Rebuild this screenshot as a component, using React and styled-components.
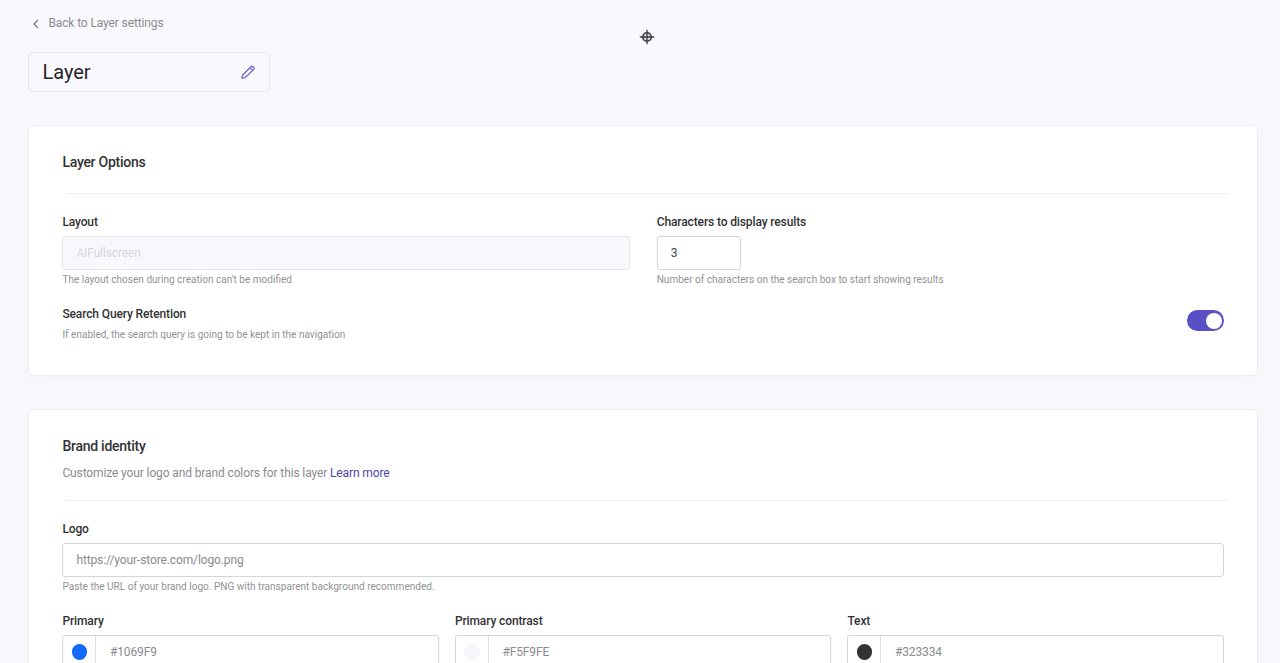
import React, { useState } from "react";
import styled, { createGlobalStyle } from "styled-components";

const colorFields = [
  { label: "Primary", value: "#1069F9" },
  { label: "Primary contrast", value: "#F5F9FE", swatch: "#f6f7fc" },
  { label: "Text", value: "#323334" },
];

const App = () => {
  const [retention, setRetention] = useState(true);

  return (
    <Page>
      <GlobalStyle />
      <BackLink>
        <svg width="6" height="10" viewBox="0 0 6 10">
          <path d="M5 1 1 5l4 4" fill="none" stroke="#77777c" strokeWidth="1.2" />
        </svg>
        Back to Layer settings
      </BackLink>
      <TitleBox>
        <Title>Layer</Title>
        <PencilIcon />
      </TitleBox>
      <Cursor />

      <Card>
        <CardTitle>Layer Options</CardTitle>
        <Divider />
        <Columns $count={2} $gap="27px">
          <Field>
            <Label>Layout</Label>
            <Input placeholder="AIFullscreen" disabled />
            <Help>The layout chosen during creation can't be modified</Help>
          </Field>
          <Field>
            <Label>Characters to display results</Label>
            <Input defaultValue="3" $width="84px" />
            <Help>Number of characters on the search box to start showing results</Help>
          </Field>
        </Columns>
        <SwitchRow>
          <div>
            <Label>Search Query Retention</Label>
            <Help $top="6px">
              If enabled, the search query is going to be kept in the navigation
            </Help>
          </div>
          <Switch
            role="switch"
            aria-checked={retention}
            $on={retention}
            onClick={() => setRetention(!retention)}
          />
        </SwitchRow>
      </Card>

      <Card>
        <CardTitle>Brand identity</CardTitle>
        <CardText>
          Customize your logo and brand colors for this layer <a>Learn more</a>
        </CardText>
        <Divider $top="18px" />
        <Field>
          <Label>Logo</Label>
          <Input placeholder="https://your-store.com/logo.png" />
          <Help>
            Paste the URL of your brand logo. PNG with transparent background
            recommended.
          </Help>
        </Field>
        <ColorRow $count={3} $gap="16px">
          {colorFields.map(({ label, value, swatch }) => (
            <Field key={label}>
              <Label>{label}</Label>
              <ColorInput>
                <SwatchCell>
                  <Swatch $color={swatch || value} />
                </SwatchCell>
                <ColorValue>{value}</ColorValue>
              </ColorInput>
            </Field>
          ))}
        </ColorRow>
      </Card>
    </Page>
  );
};

export default App;

const PencilIcon = () => (
  <svg width="16" height="16" viewBox="0 0 16 16">
    <g fill="none" stroke="#6e69c8" strokeWidth="1.25" strokeLinejoin="round">
      <path d="M1.8 14.2 2.5 11.2 11.2 2.5a1 1 0 0 1 1.4 0l1.3 1.3a1 1 0 0 1 0 1.4L5 13.7Z" />
      <path d="M10 3.7 12.7 6.4" />
    </g>
  </svg>
);

const Cursor = () => (
  <CursorSvg width="16" height="16" viewBox="0 0 16 16">
    <circle cx="8" cy="8" r="4.3" fill="#d9d9dd" stroke="#3c3c40" strokeWidth="1.6" />
    <path d="M8 .8v14.4M.8 8h14.4" stroke="#3c3c40" strokeWidth="1.3" />
  </CursorSvg>
);

const GlobalStyle = createGlobalStyle`
  * {
    box-sizing: border-box;
  }

  body {
    margin: 0;
    background: #f9f9fd;
    color: #323334;
    font-family: Roboto, "Liberation Sans", sans-serif;
    letter-spacing: -0.12px;
  }
`;

const Page = styled.div`
  height: 100vh;
  overflow: hidden;
  padding: 16px 22px 0 28px;
`;

const BackLink = styled.div`
  display: flex;
  align-items: center;
  gap: 9px;
  padding-left: 5.4px;
  font-size: 12px;
  line-height: 15px;
  color: #8b8b8f;
`;

const TitleBox = styled.div`
  display: flex;
  align-items: center;
  justify-content: space-between;
  width: 242px;
  height: 40px;
  margin-top: 21px;
  padding: 0 13.5px 0 13.4px;
  border: 1px solid #e7e7ee;
  border-radius: 4px;
`;

const Title = styled.h1`
  margin: 0;
  font-size: 20px;
  font-weight: 400;
  letter-spacing: 0;
  color: #262628;
`;

const CursorSvg = styled.svg`
  position: absolute;
  left: 639px;
  top: 28.5px;
`;

const Card = styled.section`
  margin-top: 33px;
  padding: 26px 33px 33px 33.4px;
  background: #fff;
  border: 1px solid #ececf2;
  border-radius: 5px;
  box-shadow: 0 3px 16px rgba(60, 60, 110, 0.04);
`;

const CardTitle = styled.h2`
  margin: 0;
  font-size: 14px;
  font-weight: 500;
  line-height: 21px;
  letter-spacing: -0.26px;
`;

const CardText = styled.p`
  margin: 7px 0 0;
  font-size: 12px;
  line-height: 18px;
  color: #8b8b8f;

  a {
    color: #4b48a8;
  }
`;

const Divider = styled.div`
  height: 1px;
  margin: ${({ $top }) => $top || "20px"} -4px 20px 4px;
  background: #ededf0;
`;

const Columns = styled.div`
  display: grid;
  grid-template-columns: repeat(${({ $count }) => $count}, 1fr);
  gap: ${({ $gap }) => $gap};
`;

const ColorRow = styled(Columns)`
  margin-top: 20px;
`;

const Field = styled.div`
  display: flex;
  flex-direction: column;
  align-items: flex-start;
`;

const Label = styled.div`
  font-size: 12px;
  font-weight: 500;
  line-height: 16px;
`;

const Input = styled.input`
  width: ${({ $width }) => $width || "100%"};
  height: 34px;
  margin-top: 6px;
  padding: 0 13px;
  border: 1px solid #d5d5d9;
  border-radius: 3px;
  background: #fff;
  color: #47474b;
  font: 400 12px Roboto, "Liberation Sans", sans-serif;
  letter-spacing: -0.12px;

  &::placeholder {
    color: #8b8b8f;
  }

  &:disabled {
    border-color: #e7e7ed;
    background: #f8f8fc;
  }

  &:disabled::placeholder {
    color: #d6d6dc;
  }
`;

const Help = styled.div`
  margin-top: ${({ $top }) => $top || "3px"};
  font-size: 10.05px;
  line-height: 13px;
  letter-spacing: 0;
  color: #929296;
`;

const SwitchRow = styled.div`
  display: flex;
  align-items: flex-start;
  justify-content: space-between;
  margin-top: 20px;
  height: 36px;
`;

const Switch = styled.button`
  display: flex;
  align-items: center;
  justify-content: ${({ $on }) => ($on ? "flex-end" : "flex-start")};
  width: 37px;
  height: 21px;
  margin-top: 4px;
  padding: 0 2px;
  border: 0;
  border-radius: 11px;
  background: ${({ $on }) => ($on ? "#5850c4" : "#c9c9d0")};

  &::after {
    content: "";
    width: 16px;
    height: 16px;
    border-radius: 50%;
    background: #fff;
  }
`;

const ColorInput = styled.div`
  display: flex;
  width: 100%;
  height: 34px;
  margin-top: 6px;
  border: 1px solid #d5d5d9;
  border-radius: 3px;
`;

const SwatchCell = styled.div`
  display: flex;
  align-items: center;
  justify-content: center;
  width: 33px;
  border-right: 1px solid #dedee2;
`;

const Swatch = styled.span`
  width: 15.5px;
  height: 15.5px;
  border-radius: 50%;
  background: ${({ $color }) => $color};
`;

const ColorValue = styled.span`
  padding-left: 13.5px;
  font-size: 12px;
  line-height: 32px;
  color: #8b8b8f;
`;
